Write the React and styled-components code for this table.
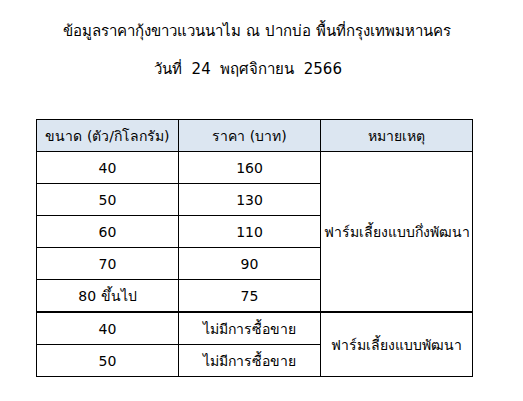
import styled, { createGlobalStyle } from 'styled-components';

const GlobalStyle = createGlobalStyle`
  html, body {
    margin: 0;
    padding: 0;
    background: #fff;
  }
  body {
    font-family: Tahoma, 'DejaVu Sans', 'Noto Sans', sans-serif;
    color: #000;
  }
`;

const rows = [
  { size: '40', price: '160' },
  { size: '50', price: '130' },
  { size: '60', price: '110' },
  { size: '70', price: '90' },
  { size: '80 ขึ้นไป', price: '75' },
];

const devRows = [
  { size: '40', price: 'ไม่มีการซื้อขาย' },
  { size: '50', price: 'ไม่มีการซื้อขาย' },
];

const App = () => {
  return (
    <>
      <GlobalStyle />
      <Page>
        <TitleBlock>
          <Title>ข้อมูลราคากุ้งขาวแวนนาไม ณ ปากบ่อ พื้นที่กรุงเทพมหานคร</Title>
          <Title shift={18}>วันที่  24  พฤศจิกายน  2566</Title>
        </TitleBlock>
        <PriceTable>
          <colgroup>
            <col style={{ width: 142 }} />
            <col style={{ width: 142 }} />
            <col style={{ width: 152 }} />
          </colgroup>
          <thead>
            <tr>
              <HeadCell>ขนาด (ตัว/กิโลกรัม)</HeadCell>
              <HeadCell>ราคา (บาท)</HeadCell>
              <HeadCell>หมายเหตุ</HeadCell>
            </tr>
          </thead>
          <tbody>
            {rows.map((r, i) => (
              <tr key={r.size}>
                <Cell>{r.size}</Cell>
                <Cell>{r.price}</Cell>
                {i === 0 && <Cell rowSpan={rows.length}>ฟาร์มเลี้ยงแบบกึ่งพัฒนา</Cell>}
              </tr>
            ))}
            {devRows.map((r, i) => (
              <tr key={'d' + r.size}>
                <Cell thick={i === 0}>{r.size}</Cell>
                <Cell thick={i === 0}>{r.price}</Cell>
                {i === 0 && (
                  <Cell thick rowSpan={devRows.length}>
                    ฟาร์มเลี้ยงแบบพัฒนา
                  </Cell>
                )}
              </tr>
            ))}
          </tbody>
        </PriceTable>
      </Page>
    </>
  );
};

export default App;

const Page = styled.div`
  width: 523px;
  height: 401px;
  padding-top: 19px;
  box-sizing: border-box;
`;

const TitleBlock = styled.div`
  display: flex;
  flex-direction: column;
  align-items: center;
  gap: 14px;
  padding-right: 9px;
`;

const Title = styled.div`
  font-size: 15px;
  line-height: 24px;
  white-space: pre;
  margin-right: ${({ shift }) => (shift ? `${shift}px` : '0')};
`;

const PriceTable = styled.table`
  margin: 38px 0 0 36px;
  width: 437px;
  border-collapse: collapse;
  table-layout: fixed;
  font-size: 14px;
`;

const HeadCell = styled.th`
  height: 31px;
  padding: 0;
  background: #dce6f1;
  border: 1px solid #000;
  font-weight: normal;
  text-align: center;
`;

const Cell = styled.td`
  height: 31px;
  padding: 0;
  border: 1px solid #000;
  border-top-width: ${({ thick }) => (thick ? '2px' : '1px')};
  text-align: center;
  vertical-align: middle;
`;
